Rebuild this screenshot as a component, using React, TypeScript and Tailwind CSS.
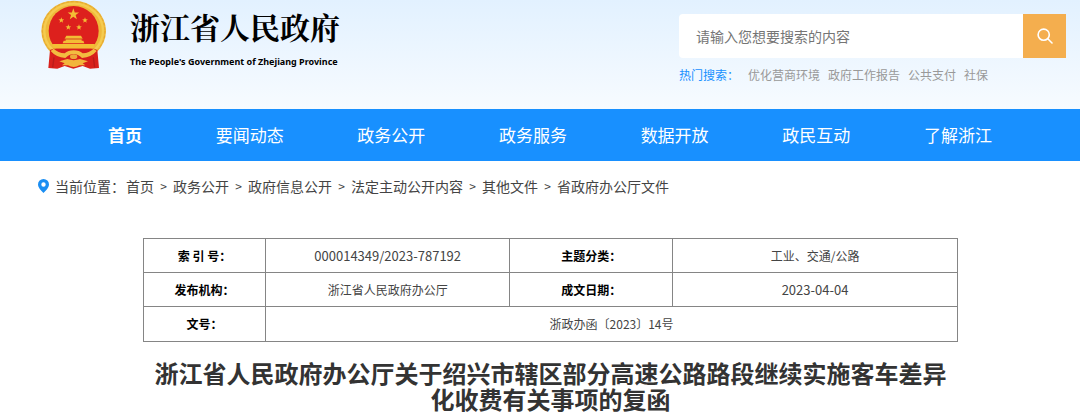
import React from "react";

const navItems = ["首页", "要闻动态", "政务公开", "政务服务", "数据开放", "政民互动", "了解浙江"];
const hotWords = ["优化营商环境", "政府工作报告", "公共支付", "社保"];
const crumbs = ["首页", "政务公开", "政府信息公开", "法定主动公开内容", "其他文件", "省政府办公厅文件"];

const STAR = "M0,-10 L2.4,-3.2 L9.5,-3.1 L3.8,1.2 L5.9,8.1 L0,4 L-5.9,8.1 L-3.8,1.2 L-9.5,-3.1 L-2.4,-3.2 Z";

function Emblem() {
  return (
    <svg viewBox="0 0 201 210" className="h-[70px] w-[67px] shrink-0" role="img" aria-label="国徽">
      <ellipse cx="101" cy="93" rx="97" ry="91" fill="#efb93a" />
      <ellipse cx="101" cy="93" rx="88" ry="82" fill="none" stroke="#f5cb50" strokeWidth="7" />
      <ellipse cx="101" cy="93" rx="94" ry="88" fill="none" stroke="#e5a730" strokeWidth="3" strokeDasharray="8 6" />
      <circle cx="101" cy="93" r="75" fill="#dd201d" />
      <g fill="#f3bd35">
        <path d={STAR} transform="translate(100 43) scale(1.8)" />
        <path d={STAR} transform="translate(64 61) scale(0.9)" />
        <path d={STAR} transform="translate(135 61) scale(0.9)" />
        <path d={STAR} transform="translate(85 82) scale(0.9)" />
        <path d={STAR} transform="translate(117 82) scale(0.9)" />
        <path d="M79 107 H123 L128 116 H74 Z" />
        <path d="M77 118 H125 V122 H130 L133 130 H68 L71 122 H77 Z" />
        <path d="M36 132 H165 L160 146 H41 Z" />
      </g>
      <path d="M72 117 H129" stroke="#cf5a1e" strokeWidth="2" />
      <path d="M30 150 L40 146 H162 L172 150 L177 204 L150 206 L128 198 L100 206 L74 198 L52 206 L25 204 Z" fill="#d8201c" />
      <path d="M41 146 Q54 158 74 160 Q84 151 101 151 Q118 151 128 160 Q148 158 161 146 L170 153 Q154 172 126 174 Q114 162 101 162 Q88 162 76 174 Q48 172 32 153 Z" fill="#f2bd40" />
      <ellipse cx="101" cy="170" rx="11" ry="7" fill="#eda93a" />
      <path d="M58 184 L82 177 Q101 184 120 177 L144 184 L128 190 L136 196 L118 196 Q101 206 84 196 L66 196 L74 190 Z" fill="#f2b53c" />
      <path d="M42 172 L38 202 M160 172 L164 202" stroke="#b91c1a" strokeWidth="4" />
    </svg>
  );
}

function Label({ children }: { children: React.ReactNode }) {
  return (
    <th scope="row" className="border border-[#858585] p-0 font-bold text-black">
      {children}
    </th>
  );
}

export default function App() {
  return (
    <div className="bg-white font-['Noto_Sans_CJK_SC',sans-serif] text-[#444]">
      <header className="flex h-[109px] justify-between bg-linear-to-b from-[#e2f1ff] to-[#f7fbff] pr-[14px] pl-10">
        <div className="flex items-start gap-[23px]">
          <Emblem />
          <div className="pt-[6px] text-black">
            <div className="font-['Noto_Serif_CJK_SC','Noto_Sans_CJK_SC',serif] text-[30px] leading-10 font-bold">浙江省人民政府</div>
            <div className="pt-2 font-['Noto_Sans',sans-serif] text-[9px] leading-4 font-bold whitespace-nowrap">
              The People's Government of Zhejiang Province
            </div>
          </div>
        </div>
        <div className="w-[387px] pt-[14px]">
          <form className="flex h-11" onSubmit={(e) => e.preventDefault()}>
            <input
              type="text"
              aria-label="搜索"
              placeholder="请输入您想要搜索的内容"
              className="min-w-0 flex-1 rounded-l bg-white px-[17px] text-[14px] outline-none placeholder:text-[#757575]"
            />
            <button type="submit" aria-label="搜索" className="flex w-[43px] items-center justify-center bg-[#f4ae4e]">
              <svg viewBox="0 0 16 16" className="size-4" fill="none" stroke="#fff" strokeWidth="1.6" strokeLinecap="round">
                <circle cx="6.700" cy="6.700" r="5.600" />
                <path d="M10.800 10.800 L15 15" />
              </svg>
            </button>
          </form>
          <div className="flex pt-2 text-[12px] leading-[18px] whitespace-nowrap text-[#999]">
            <span className="w-[69px] text-[#1890ff]">热门搜索：</span>
            <div className="flex gap-2">
              {hotWords.map((w) => (
                <a key={w} href="#">{w}</a>
              ))}
            </div>
          </div>
        </div>
      </header>

      <nav className="flex h-[52px] items-center justify-between bg-[#1890ff] pr-[88px] pl-[108px] text-[17px] text-white">
        {navItems.map((n, i) => (
          <a key={n} href="#" className={i === 0 ? "font-bold" : ""}>{n}</a>
        ))}
      </nav>

      <div className="flex h-[50px] items-center pl-[38px] text-[14px] whitespace-nowrap">
        <svg viewBox="0 0 11 14" className="mr-[6px] h-[14px] w-[11px]">
          <path fillRule="evenodd" fill="#1b8ef2" d="M5.500 0 A5.500 5.500 0 0 1 11 5.500 C11 8.500 8 11.500 5.500 14 C3 11.500 0 8.500 0 5.500 A5.500 5.500 0 0 1 5.500 0 Z M5.500 3.300 A2.200 2.200 0 1 0 5.500 7.700 A2.200 2.200 0 1 0 5.500 3.300 Z" />
        </svg>
        <span className="w-[71px]">当前位置：</span>
        {crumbs.map((c, i) => (
          <React.Fragment key={c}>
            {i > 0 && <span className="w-[19px] text-center text-[12px]">&gt;</span>}
            <a href="#">{c}</a>
          </React.Fragment>
        ))}
      </div>

      <main className="pt-[27px] pr-[122px] pl-[143px]">
        <table className="w-full table-fixed border-collapse text-center text-[12px]">
          <colgroup>
            <col className="w-[15%]" />
            <col className="w-[30%]" />
            <col className="w-[20%]" />
            <col className="w-[35%]" />
          </colgroup>
          <tbody>
            <tr className="h-[34px]">
              <Label>索 引 号：</Label>
              <td className="border border-[#858585] p-0 text-[13px]">000014349/2023-787192</td>
              <Label>主题分类：</Label>
              <td className="border border-[#858585] p-0">工业、交通/公路</td>
            </tr>
            <tr className="h-[34px]">
              <Label>发布机构：</Label>
              <td className="border border-[#858585] p-0">浙江省人民政府办公厅</td>
              <Label>成文日期：</Label>
              <td className="border border-[#858585] p-0 text-[13px]">2023-04-04</td>
            </tr>
            <tr className="h-[35px]">
              <Label>文号：</Label>
              <td colSpan={3} className="border border-[#858585] p-0">浙政办函〔2023〕14号</td>
            </tr>
          </tbody>
        </table>
        <h1 className="pt-[18px] text-center text-[24px] leading-[26px] font-bold text-[#333]">
          浙江省人民政府办公厅关于绍兴市辖区部分高速公路路段继续实施客车差异化收费有关事项的复函
        </h1>
      </main>
    </div>
  );
}
